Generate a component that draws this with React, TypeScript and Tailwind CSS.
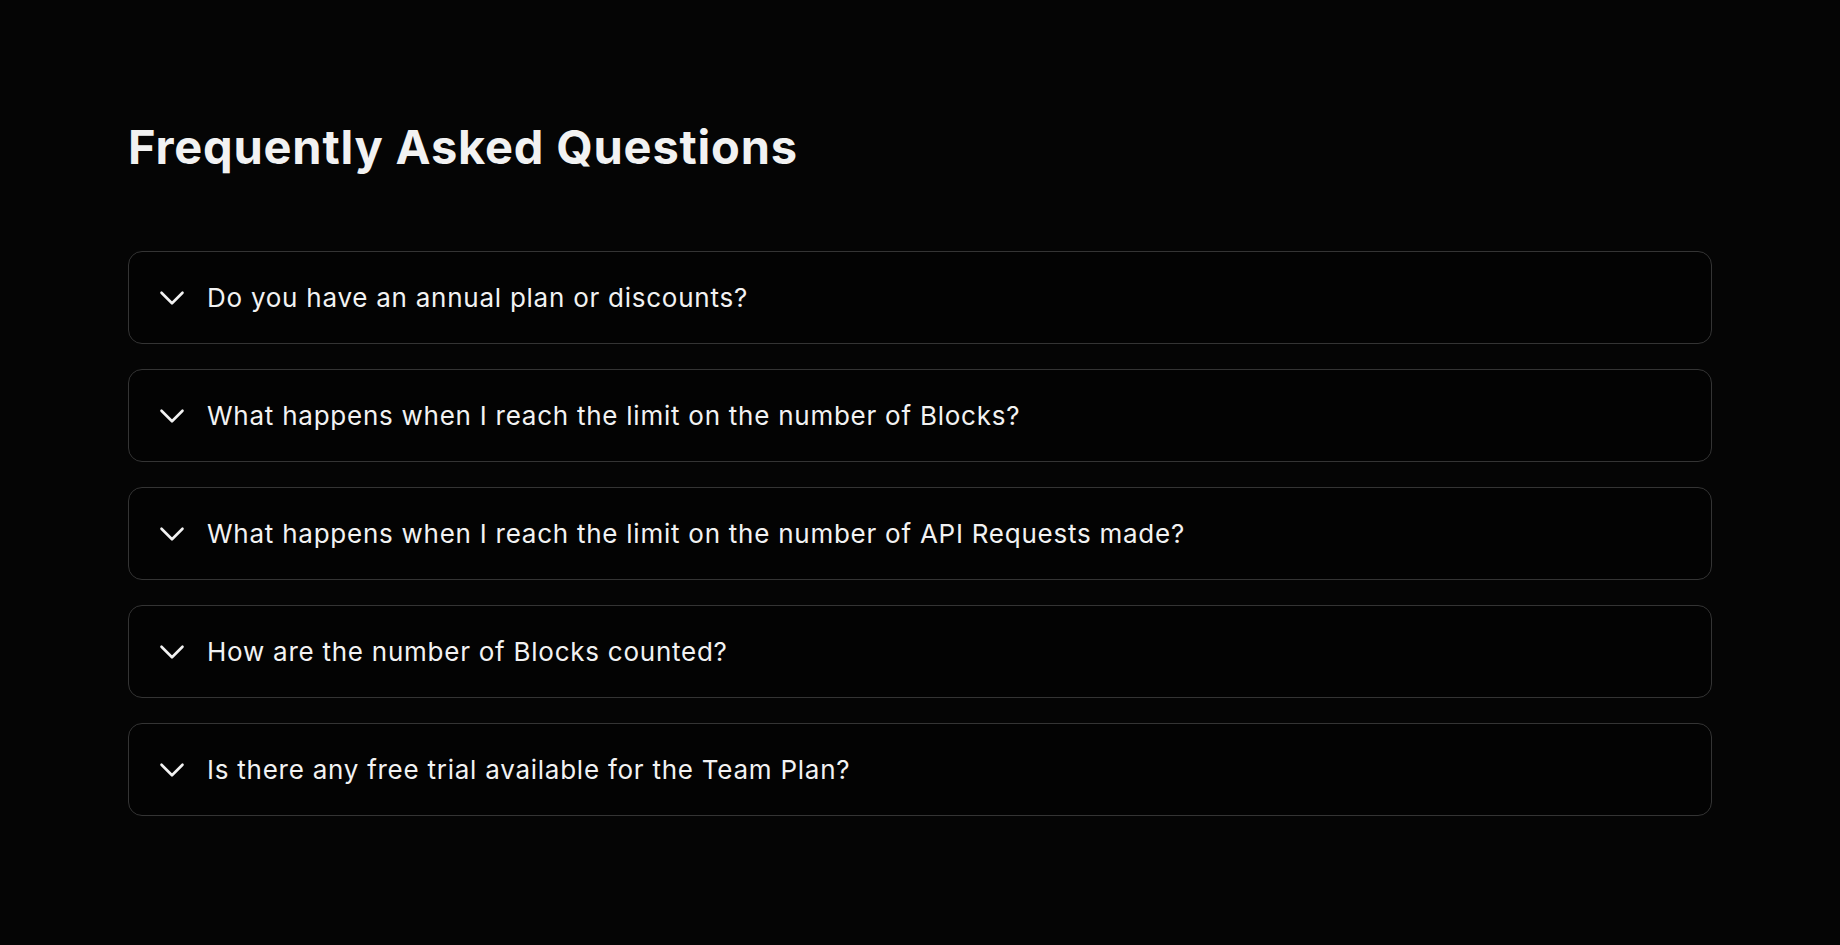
import { ChevronDown } from "lucide-react";

const questions = [
  "Do you have an annual plan or discounts?",
  "What happens when I reach the limit on the number of Blocks?",
  "What happens when I reach the limit on the number of API Requests made?",
  "How are the number of Blocks counted?",
  "Is there any free trial available for the Team Plan?",
];

const FaqItem = ({ question }: { question: string }) => (
  <div className="flex h-[93px] items-center rounded-[14px] border border-[#343434] bg-[#030303] pl-[32px]">
    <ChevronDown className="h-[42px] w-[42px] text-[#f2f2f2] -ml-[10px]" strokeWidth={1.5} />
    <span className="ml-[14px] text-[26px] tracking-[0.75px] text-[#f2f2f2]">{question}</span>
  </div>
);

const App = () => {
  return (
    <div
      className="min-h-screen bg-[#050505] px-32 pt-[123px]"
      style={{ fontFamily: "Inter, 'Liberation Sans', sans-serif" }}
    >
      <h1 className="text-[47px] font-bold leading-none tracking-[0.8px] text-[#f2f2f2]">
        Frequently Asked Questions
      </h1>
      <div className="mt-[81px] flex flex-col gap-[25px]">
        {questions.map((q) => (
          <FaqItem key={q} question={q} />
        ))}
      </div>
    </div>
  );
};

export default App;
